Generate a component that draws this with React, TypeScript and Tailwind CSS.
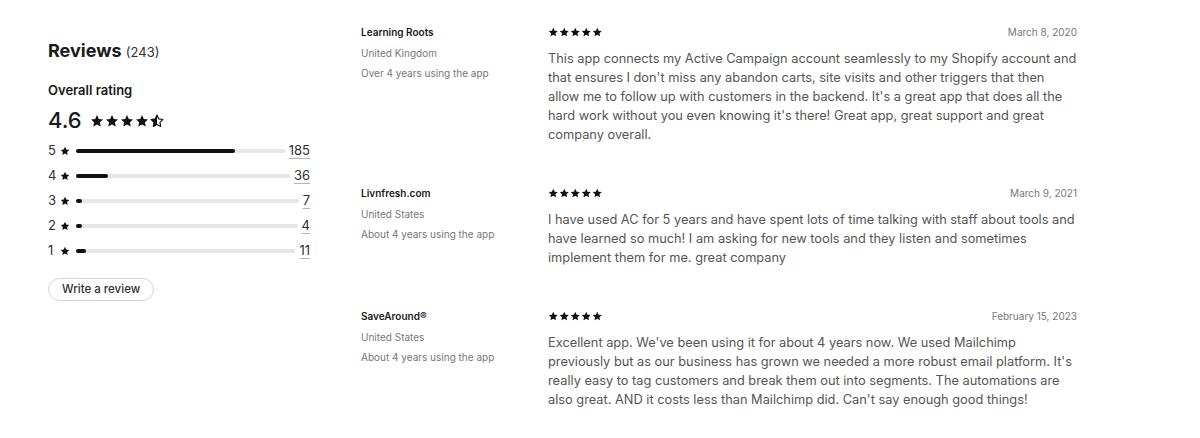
const ratingRows = [
  { stars: 5, count: 185 },
  { stars: 4, count: 36 },
  { stars: 3, count: 7 },
  { stars: 2, count: 4 },
  { stars: 1, count: 11 },
];

const total = 243;

const reviews = [
  {
    name: 'Learning Roots',
    country: 'United Kingdom',
    usage: 'Over 4 years using the app',
    date: 'March 8, 2020',
    body: "This app connects my Active Campaign account seamlessly to my Shopify account and that ensures I don't miss any abandon carts, site visits and other triggers that then allow me to follow up with customers in the backend. It's a great app that does all the hard work without you even knowing it's there! Great app, great support and great company overall.",
  },
  {
    name: 'Livnfresh.com',
    country: 'United States',
    usage: 'About 4 years using the app',
    date: 'March 9, 2021',
    body: 'I have used AC for 5 years and have spent lots of time talking with staff about tools and have learned so much! I am asking for new tools and they listen and sometimes implement them for me. great company',
  },
  {
    name: 'SaveAround®',
    country: 'United States',
    usage: 'About 4 years using the app',
    date: 'February 15, 2023',
    body: "Excellent app. We've been using it for about 4 years now. We used Mailchimp previously but as our business has grown we needed a more robust email platform. It's really easy to tag customers and break them out into segments. The automations are also great. AND it costs less than Mailchimp did. Can't say enough good things!",
  },
];

const STAR = 'M10 1.5l2.6 5.5 6 .8-4.4 4.1 1.1 5.9L10 14.9l-5.3 2.9 1.1-5.9L1.4 7.8l6-.8z';

function Star({ size = 10, half = false }: { size?: number; half?: boolean }) {
  if (half) {
    return (
      <svg width={size} height={size} viewBox="0 0 20 20">
        <defs>
          <clipPath id="half-left">
            <rect x="0" y="0" width="10" height="20" />
          </clipPath>
        </defs>
        <path d={STAR} fill="none" stroke="#111" strokeWidth="1.6" strokeLinejoin="round" />
        <path d={STAR} fill="#111" clipPath="url(#half-left)" />
      </svg>
    );
  }
  return (
    <svg width={size} height={size} viewBox="0 0 20 20">
      <path d={STAR} fill="#111" />
    </svg>
  );
}

function Summary() {
  return (
    <div className="w-[262px] shrink-0 pt-[40px]">
      <h2 className="text-[18px] font-bold text-[#1a1a1a] leading-[22px]">
        Reviews <span className="text-[13px] font-normal text-[#303030]">(243)</span>
      </h2>
      <div className="mt-[19px] text-[13px] font-semibold text-[#1a1a1a] leading-[16px]">Overall rating</div>
      <div className="mt-[8px] flex items-center gap-[8px]">
        <span className="text-[22px] font-medium text-[#1a1a1a] leading-[28px]">4.6</span>
        <div className="flex items-center gap-[1px] pt-[1px]">
          <Star size={14} />
          <Star size={14} />
          <Star size={14} />
          <Star size={14} />
          <Star size={14} half />
        </div>
      </div>
      <div className="mt-[4px] flex flex-col">
        {ratingRows.map((row) => (
          <div key={row.stars} className="flex items-center h-[25px] text-[13px] text-[#303030]">
            <span className="w-[9px]">{row.stars}</span>
            <span className="ml-[3px]">
              <Star size={10} />
            </span>
            <div className="ml-[6px] flex-1 h-[4px] rounded-full bg-[#e6e6e6]">
              <div
                className="h-[4px] rounded-full bg-[#111]"
                style={{ width: `${Math.max((row.count / total) * 100, 2.5)}%` }}
              />
            </div>
            <a className="ml-[4px] underline decoration-[#b5b5b5] underline-offset-[3px] text-[#303030]">{row.count}</a>
          </div>
        ))}
      </div>
      <button className="mt-[15px] h-[23px] px-[13px] rounded-full border border-[#d4d4d4] text-[11.5px] font-medium text-[#303030] bg-white">
        Write a review
      </button>
    </div>
  );
}

function Review({ r }: { r: (typeof reviews)[number] }) {
  return (
    <div className="flex pb-[39px]">
      <div className="w-[187px] shrink-0 text-[10px] leading-[20.5px]">
        <div className="font-semibold text-[#1a1a1a]">{r.name}</div>
        <div className="text-[#777]">{r.country}</div>
        <div className="text-[#777]">{r.usage}</div>
      </div>
      <div className="w-[529px]">
        <div className="flex items-center justify-between h-[20px]">
          <div className="flex gap-[0.5px]">
            <Star size={10.5} />
            <Star size={10.5} />
            <Star size={10.5} />
            <Star size={10.5} />
            <Star size={10.5} />
          </div>
          <span className="text-[10px] text-[#777]">{r.date}</span>
        </div>
        <p className="mt-[7px] text-[12.8px] leading-[19px] text-[#555]">{r.body}</p>
      </div>
    </div>
  );
}

export default function App() {
  return (
    <div className="w-[1200px] h-[438px] bg-white flex pl-[48px] font-['Inter',sans-serif] overflow-hidden">
      <Summary />
      <div className="ml-[51px] pt-[22px] flex flex-col">
        {reviews.map((r) => (
          <Review key={r.name} r={r} />
        ))}
      </div>
    </div>
  );
}
